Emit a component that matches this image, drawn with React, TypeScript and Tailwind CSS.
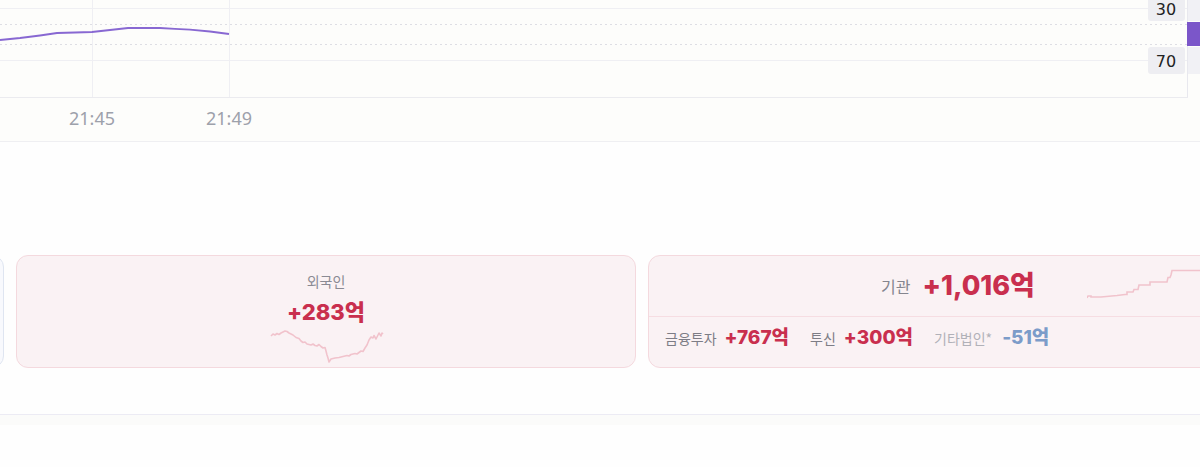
import React from "react";

const KR = '"Inter", "Noto Sans CJK KR", sans-serif';
const KR_ONLY = '"Noto Sans CJK KR", "Noto Sans", sans-serif';

// Intraday line (x, y) in chart pixels
const priceLine: [number, number][] = [
  [0, 40],
  [20, 38],
  [40, 35.5],
  [57, 33],
  [75, 32.5],
  [92, 32],
  [110, 30],
  [128, 28],
  [145, 28],
  [160, 28],
  [175, 28.8],
  [190, 29.6],
  [210, 31.5],
  [229, 34],
];

// Foreign net-buy sparkline, local coords inside a 116x36 box
const foreignSpark: [number, number][] = [
  [2, 8], [4, 6], [6, 7], [8, 5.5], [10, 6.5], [12, 5], [14, 4], [16, 3], [18, 3.5],
  [20, 5], [22, 6], [24, 7], [27, 9.5], [30, 10.5], [32, 13], [34, 14.5], [36, 14],
  [38, 16], [40, 16.5], [42, 17], [44, 16], [46, 17.5], [48, 18], [50, 16.5], [52, 18.5],
  [54, 20], [56, 19.5], [57, 23], [58, 27], [59, 30], [60, 34], [62, 31], [64, 30.5],
  [66, 30], [70, 29.5], [74, 28.5], [78, 27.5], [80, 28], [82, 26.5], [86, 25.5], [88, 26],
  [90, 24.5], [92, 23], [94, 23.5], [96, 20], [98, 17], [100, 12], [102, 9], [104, 10],
  [105, 7.5], [107, 11], [108, 9], [110, 5], [112, 8], [113, 5], [114, 6],
];

// Institution step sparkline, local coords inside a box starting at card x 438
const instSpark: [number, number][] = [
  [0, 31], [1, 29], [4, 29], [4, 30], [14, 30], [30, 28.5], [38, 27.5], [40, 27.5],
  [40, 25], [46, 25], [47, 22.5], [51, 22.5], [52, 18], [63, 18], [63, 15], [80, 15],
  [81, 10.5], [83, 10.5], [84, 8], [85, 3.5], [120, 3.5], [150, 3],
];

const toPoints = (pts: [number, number][]) => pts.map(([x, y]) => `${x},${y}`).join(" ");

function PriceChart() {
  return (
    <div className="h-[142px] w-full border-b border-[#efeff2] bg-[#fdfdfb]">
      <svg width="1200" height="141" viewBox="0 0 1200 141" className="block">
        {/* grid */}
        <line x1="0" y1="8.5" x2="1187" y2="8.5" stroke="#efeff3" strokeWidth="1" />
        <line x1="0" y1="60.5" x2="1187" y2="60.5" stroke="#efeff3" strokeWidth="1" />
        <line x1="0" y1="24.5" x2="1187" y2="24.5" stroke="#dedee4" strokeWidth="1" strokeDasharray="2 3" />
        <line x1="0" y1="44.5" x2="1187" y2="44.5" stroke="#dedee4" strokeWidth="1" strokeDasharray="2 3" />
        <line x1="92.5" y1="0" x2="92.5" y2="97" stroke="#efeff3" strokeWidth="1" />
        <line x1="229.5" y1="0" x2="229.5" y2="97" stroke="#efeff3" strokeWidth="1" />
        <line x1="0" y1="97.5" x2="1188" y2="97.5" stroke="#ebebef" strokeWidth="1" />

        {/* price scale */}
        <rect x="1188" y="0" width="12" height="21" fill="#f1f1f5" />
        <rect x="1188" y="47" width="12" height="27" fill="#f1f1f5" />
        <rect x="1148" y="-4" width="37" height="25" rx="3" fill="#eeeef2" />
        <rect x="1148" y="47" width="37" height="27" rx="3" fill="#eeeef2" />
        <line x1="1187.5" y1="0" x2="1187.5" y2="97" stroke="#e8e8ee" strokeWidth="1" />
        <rect x="1187" y="22" width="13" height="24" fill="#7b56c9" />
        <text x="1166" y="15" textAnchor="middle" fontSize="16" fill="#222" fontFamily='"DejaVu Sans", sans-serif'>
          30
        </text>
        <text x="1166" y="67" textAnchor="middle" fontSize="16" fill="#222" fontFamily='"DejaVu Sans", sans-serif'>
          70
        </text>

        {/* price line */}
        <polyline points={toPoints(priceLine)} fill="none" stroke="#8868d2" strokeWidth="1.8" strokeLinejoin="round" />

        {/* time axis */}
        <text x="92" y="125" textAnchor="middle" fontSize="18" fill="#9da1ab" fontFamily='"Noto Sans", sans-serif'>
          21:45
        </text>
        <text x="229" y="125" textAnchor="middle" fontSize="18" fill="#9da1ab" fontFamily='"Noto Sans", sans-serif'>
          21:49
        </text>
      </svg>
    </div>
  );
}

function Amount({ value, tone, size }: { value: string; tone: "up" | "down"; size: string }) {
  return (
    <span
      className={`${size} font-extrabold ${tone === "up" ? "text-[#c92f4e]" : "text-[#7c9cc9]"}`}
      style={{ fontFamily: KR }}
    >
      {value}
    </span>
  );
}

function InvestorCards() {
  return (
    <div className="mt-[113px] flex w-full gap-3 overflow-hidden">
      {/* individual investor card, mostly off to the left */}
      <div className="-ml-[616px] h-[113px] w-[620px] shrink-0 rounded-xl border border-[#dfe5f1] bg-[#f8f9fd]" />

      {/* foreign investors */}
      <div className="flex h-[113px] w-[620px] shrink-0 flex-col items-center rounded-xl border border-[#f4d9de] bg-[#faf2f4] pt-[16px]">
        <span className="text-[14px] leading-[18px] text-[#8a8a93]" style={{ fontFamily: KR_ONLY }}>
          외국인
        </span>
        <div className="mt-2 leading-[28px]">
          <Amount value="+283억" tone="up" size="text-[22px]" />
        </div>
        <svg width="116" height="36" viewBox="0 0 116 36" className="-mr-[2px] block">
          <polyline
            points={toPoints(foreignSpark)}
            fill="none"
            stroke="#f1c3cc"
            strokeWidth="1.6"
            strokeLinejoin="round"
          />
        </svg>
      </div>

      {/* institutions */}
      <div className="flex h-[113px] w-[620px] shrink-0 flex-col rounded-xl border border-[#f4d9de] bg-[#faf2f4]">
        <div className="relative flex h-[61px] items-center justify-center gap-3 border-b border-[#f6dde2]">
          <span className="text-[16px] text-[#85858e]" style={{ fontFamily: KR_ONLY }}>
            기관
          </span>
          <Amount value="+1,016억" tone="up" size="text-[27px]" />
          <svg width="150" height="34" viewBox="0 0 150 34" className="absolute left-[438px] top-[11px] block">
            <polyline points={toPoints(instSpark)} fill="none" stroke="#f1c3cc" strokeWidth="1.6" />
          </svg>
        </div>
        <div className="flex flex-1 items-center gap-[21px] pb-[8px] pl-[16px]">
          <div className="flex items-center gap-2">
            <span className="text-[14px] text-[#7d7d86]" style={{ fontFamily: KR_ONLY }}>
              금융투자
            </span>
            <Amount value="+767억" tone="up" size="text-[19px]" />
          </div>
          <div className="flex items-center gap-2">
            <span className="text-[14px] text-[#7d7d86]" style={{ fontFamily: KR_ONLY }}>
              투신
            </span>
            <Amount value="+300억" tone="up" size="text-[19px]" />
          </div>
          <div className="flex items-center gap-2.5">
            <span className="text-[14px] text-[#b1b1b8]" style={{ fontFamily: KR_ONLY }}>
              기타법인*
            </span>
            <Amount value="-51억" tone="down" size="text-[19px]" />
          </div>
        </div>
      </div>
    </div>
  );
}

export default function App() {
  return (
    <div className="h-[467px] w-[1200px] overflow-hidden bg-[#fefefe]">
      <PriceChart />
      <InvestorCards />
      <div className="mt-[46px] h-[11px] border-t border-[#ecebf4] bg-[#fbfbfa]" />
    </div>
  );
}
